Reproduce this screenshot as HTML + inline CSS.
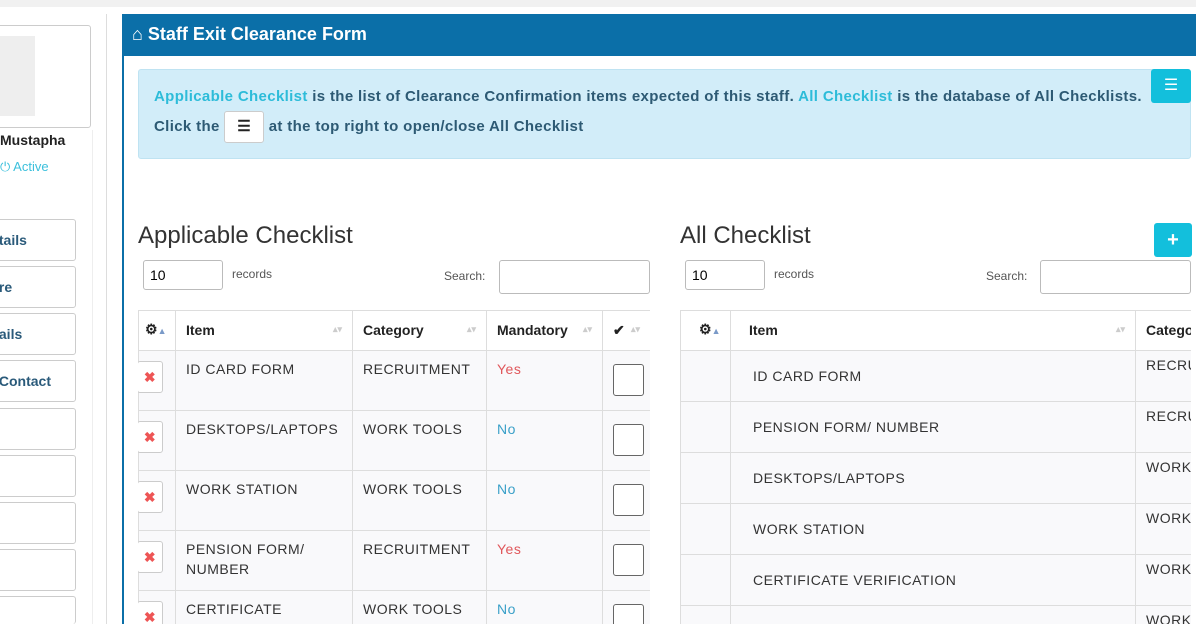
<!DOCTYPE html>
<html><head><meta charset="utf-8"><style>
*{box-sizing:border-box;margin:0;padding:0}
html,body{width:1196px;height:624px;overflow:hidden}
body{background:#fff;font-family:"Liberation Sans",sans-serif;position:relative;color:#333}
.a{position:absolute}
.sb{border:1px solid #ccc;border-radius:3px;background:#fff}
.btnl{left:-6px;width:82px;height:42px;border:1px solid #ccc;border-radius:3px;font-weight:bold;font-size:14px;color:#2a5a7a;padding:12px 0 0 0}
table{border-collapse:collapse;position:absolute;font-size:14px;table-layout:fixed}
td,th{border:1px solid #ddd;vertical-align:top;text-align:left}
th{font-weight:bold;font-size:14px;color:#222;padding:11px 10px;height:40px;background:#fff}
.t1 td{height:60px;padding:10px 10px;background:#f9f9fb;letter-spacing:.5px}
.t2 td{height:51px;padding:17px 22px;background:#f9f9fb;letter-spacing:.5px}
.x{display:inline-block;width:26px;height:32px;border:1px solid #ccc;border-radius:3px;background:#fff;color:#e55;text-align:center;line-height:30px;font-weight:bold;margin:0 0 0 -12px}
.cb{display:block;width:31px;height:32px;border:1px solid #666;border-radius:3px;background:#fff;margin:3px 0 0 0}
.yes{color:#e0575b}.no{color:#3aa0c8}
.srt{color:#ccc;font-size:9px;float:right;margin-top:2px}
input{position:absolute;border:1px solid #bbb;border-radius:3px;height:30px;font-size:14px;padding-left:6px;font-family:"Liberation Sans",sans-serif}
</style></head><body>
<div class="a" style="left:0;top:0;width:1196px;height:7px;background:#f1f1f1"></div>
<div class="a sb" style="left:-5px;top:25px;width:96px;height:103px"></div>
<div class="a" style="left:-5px;top:36px;width:40px;height:80px;background:#eee"></div>
<div class="a" style="left:0;top:132px;font-weight:bold;font-size:14px;color:#222">Mustapha</div>
<div class="a" style="left:0;top:159px;font-size:13px;color:#3cc0dc">&#x23FB; Active</div>
<div class="a" style="left:92px;top:130px;width:1px;height:494px;background:#eee"></div>
<div class="a" style="left:106px;top:14px;width:1px;height:610px;background:#ddd"></div>
<div class="a btnl" style="top:219px">&nbsp;tails</div>
<div class="a btnl" style="top:266px">&nbsp;re</div>
<div class="a btnl" style="top:313px">&nbsp;ails</div>
<div class="a btnl" style="top:360px">&nbsp;Contact</div>
<div class="a btnl" style="top:408px"></div>
<div class="a btnl" style="top:455px"></div>
<div class="a btnl" style="top:502px"></div>
<div class="a btnl" style="top:549px"></div>
<div class="a btnl" style="top:596px;height:28px;border-bottom:0"></div>
<div class="a" style="left:122px;top:14px;width:1074px;height:610px;border:2px solid #0b6fa8;border-bottom:0;border-right:0;border-radius:3px 0 0 0"></div>
<div class="a" style="left:122px;top:14px;width:1074px;height:42px;background:#0b6fa8;color:#fff;font-weight:bold;font-size:18px;padding:10px 0 0 10px">&#x2302; Staff Exit Clearance Form</div>
<div class="a" style="left:138px;top:69px;width:1053px;height:90px;background:#d2edf9;border:1px solid #bfe3f2;border-radius:3px;padding:13px 15px;font-weight:bold;font-size:15px;letter-spacing:.35px;color:#2d5a74;line-height:28px;white-space:nowrap">
<span style="color:#2dbcd9">Applicable Checklist</span> is the list of Clearance Confirmation items expected of this staff. <span style="color:#2dbcd9">All Checklist</span> is the database of All Checklists.<br>Click the <span style="display:inline-block;width:40px;height:32px;background:#fff;border:1px solid #ccc;border-radius:3px;vertical-align:middle;text-align:center;line-height:30px;color:#222">&#x2630;</span> at the top right to open/close All Checklist</div>
<div class="a" style="left:1151px;top:69px;width:40px;height:34px;background:#13bfdc;border-radius:3px;color:#fff;text-align:center;line-height:34px">&#x2630;</div>
<div class="a" style="left:138px;top:222px;font-size:24px;color:#333">Applicable Checklist</div>
<div class="a" style="left:680px;top:222px;font-size:24px;color:#333">All Checklist</div>
<div class="a" style="left:1154px;top:223px;width:38px;height:34px;background:#13bfdc;border-radius:3px;color:#fff;text-align:center;line-height:34px;font-weight:bold;font-size:20px">+</div>
<input style="left:143px;top:260px;width:80px" value="10">
<div class="a" style="left:232px;top:267px;font-size:12px;color:#555">records</div>
<div class="a" style="left:444px;top:269px;font-size:12px;color:#555">Search:</div>
<input style="left:499px;top:260px;width:151px;height:34px">
<input style="left:685px;top:260px;width:80px" value="10">
<div class="a" style="left:774px;top:267px;font-size:12px;color:#555">records</div>
<div class="a" style="left:986px;top:269px;font-size:12px;color:#555">Search:</div>
<input style="left:1040px;top:260px;width:151px;height:34px">
<div class="a" style="left:138px;top:310px;width:512px;height:314px;overflow:hidden">
<table class="t1" style="left:0;top:0;width:512px">
<tr><th style="width:37px;padding:10px 6px">&#x2699;<span style="color:#7a9ac8;font-size:9px">&#x25B2;</span></th><th style="width:177px">Item<span class="srt">&#x25B4;&#x25BE;</span></th><th style="width:134px">Category<span class="srt">&#x25B4;&#x25BE;</span></th><th style="width:116px">Mandatory<span class="srt">&#x25B4;&#x25BE;</span></th><th style="width:48px">&#x2714;<span class="srt">&#x25B4;&#x25BE;</span></th></tr>
<tr><td><span class="x">&#x2716;</span></td><td>ID CARD FORM</td><td>RECRUITMENT</td><td class="yes">Yes</td><td><span class="cb"></span></td></tr>
<tr><td><span class="x">&#x2716;</span></td><td>DESKTOPS/LAPTOPS</td><td>WORK TOOLS</td><td class="no">No</td><td><span class="cb"></span></td></tr>
<tr><td><span class="x">&#x2716;</span></td><td>WORK STATION</td><td>WORK TOOLS</td><td class="no">No</td><td><span class="cb"></span></td></tr>
<tr><td><span class="x">&#x2716;</span></td><td style="line-height:20px;padding-top:8px">PENSION FORM/<br>NUMBER</td><td>RECRUITMENT</td><td class="yes">Yes</td><td><span class="cb"></span></td></tr>
<tr><td><span class="x">&#x2716;</span></td><td>CERTIFICATE</td><td>WORK TOOLS</td><td class="no">No</td><td><span class="cb"></span></td></tr>
</table></div>
<div class="a" style="left:680px;top:310px;width:511px;height:314px;overflow:hidden">
<table class="t2" style="left:0;top:0;width:600px">
<tr><th style="width:50px;padding:10px 18px">&#x2699;<span style="color:#7a9ac8;font-size:9px">&#x25B2;</span></th><th style="width:405px;padding-left:18px">Item<span class="srt">&#x25B4;&#x25BE;</span></th><th style="width:145px">Category</th></tr>
<tr><td></td><td>ID CARD FORM</td><td style="padding:6px 10px">RECRUITMENT</td></tr>
<tr><td></td><td>PENSION FORM/ NUMBER</td><td style="padding:6px 10px">RECRUITMENT</td></tr>
<tr><td></td><td>DESKTOPS/LAPTOPS</td><td style="padding:6px 10px">WORK TOOLS</td></tr>
<tr><td></td><td>WORK STATION</td><td style="padding:6px 10px">WORK TOOLS</td></tr>
<tr><td></td><td>CERTIFICATE VERIFICATION</td><td style="padding:6px 10px">WORK TOOLS</td></tr>
<tr><td></td><td></td><td style="padding:6px 10px">WORK TOOLS</td></tr>
</table></div>
</body></html>
